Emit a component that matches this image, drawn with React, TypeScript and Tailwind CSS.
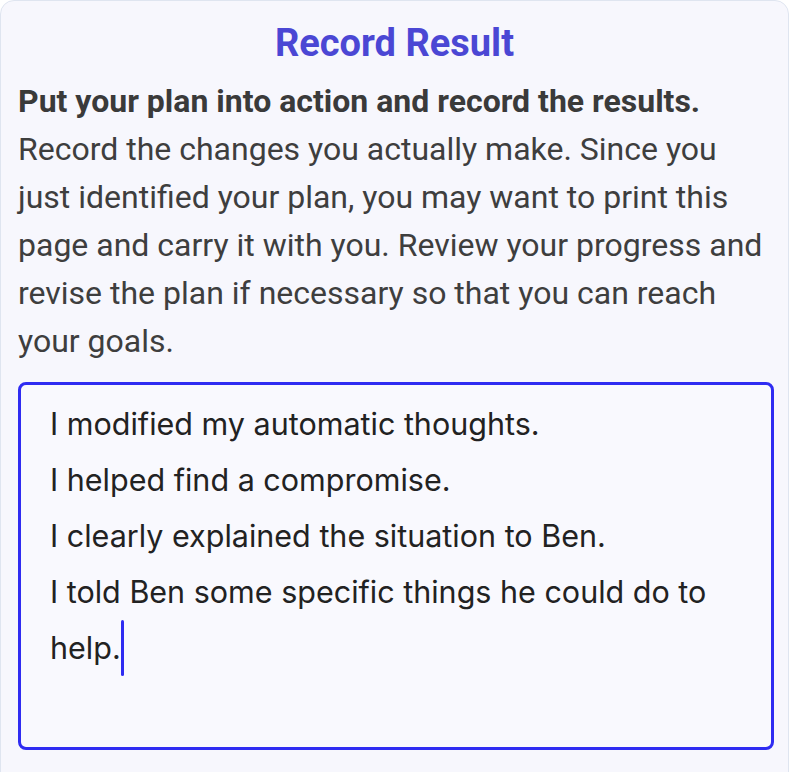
import React from "react";

export default function App() {
  const lines = [
    "I modified my automatic thoughts.",
    "I helped find a compromise.",
    "I clearly explained the situation to Ben.",
    "I told Ben some specific things he could do to",
  ];
  return (
    <div className="w-[789px] h-[772px] bg-white overflow-hidden">
      <div
        className="w-[789px] h-[790px] rounded-t-[14px] border border-[#dfe5f0] bg-[#f7f7fd] px-[17px] pt-[20px]"
        style={{ fontFamily: "Roboto, 'Liberation Sans', sans-serif" }}
      >
        <h1 className="text-center text-[38px] leading-[44px] font-bold text-[#4b47d4]">
          Record Result
        </h1>
        <div className="mt-[12px] text-[32px] leading-[48px] text-[#3e3e3e]">
          <div className="font-bold text-[32px] text-[#3a3a3a]">Put your plan into action and record the results.</div>
          <div>
            Record the changes you actually make. Since you just identified your plan, you may want to print this
            page and carry it with you. Review your progress and revise the plan if necessary so that you can reach
            your goals.
          </div>
        </div>
        <div
          className="mt-[17px] w-[756px] h-[368px] rounded-[8px] border-[3px] border-[#2f2cf2] bg-[#f9f9fe] pl-[29px] pr-[20px] pt-[11px] text-[30.5px] leading-[56px] text-[#222222]"
          style={{ fontFamily: "Inter, 'Liberation Sans', sans-serif" }}
        >
          {lines.map((l) => (
            <div key={l} className="whitespace-nowrap">{l}</div>
          ))}
          <div className="flex items-center">
            <span>help.</span>
            <span className="inline-block w-[3px] h-[56px] bg-[#2f2cf2] rounded-sm"></span>
          </div>
        </div>
      </div>
    </div>
  );
}
